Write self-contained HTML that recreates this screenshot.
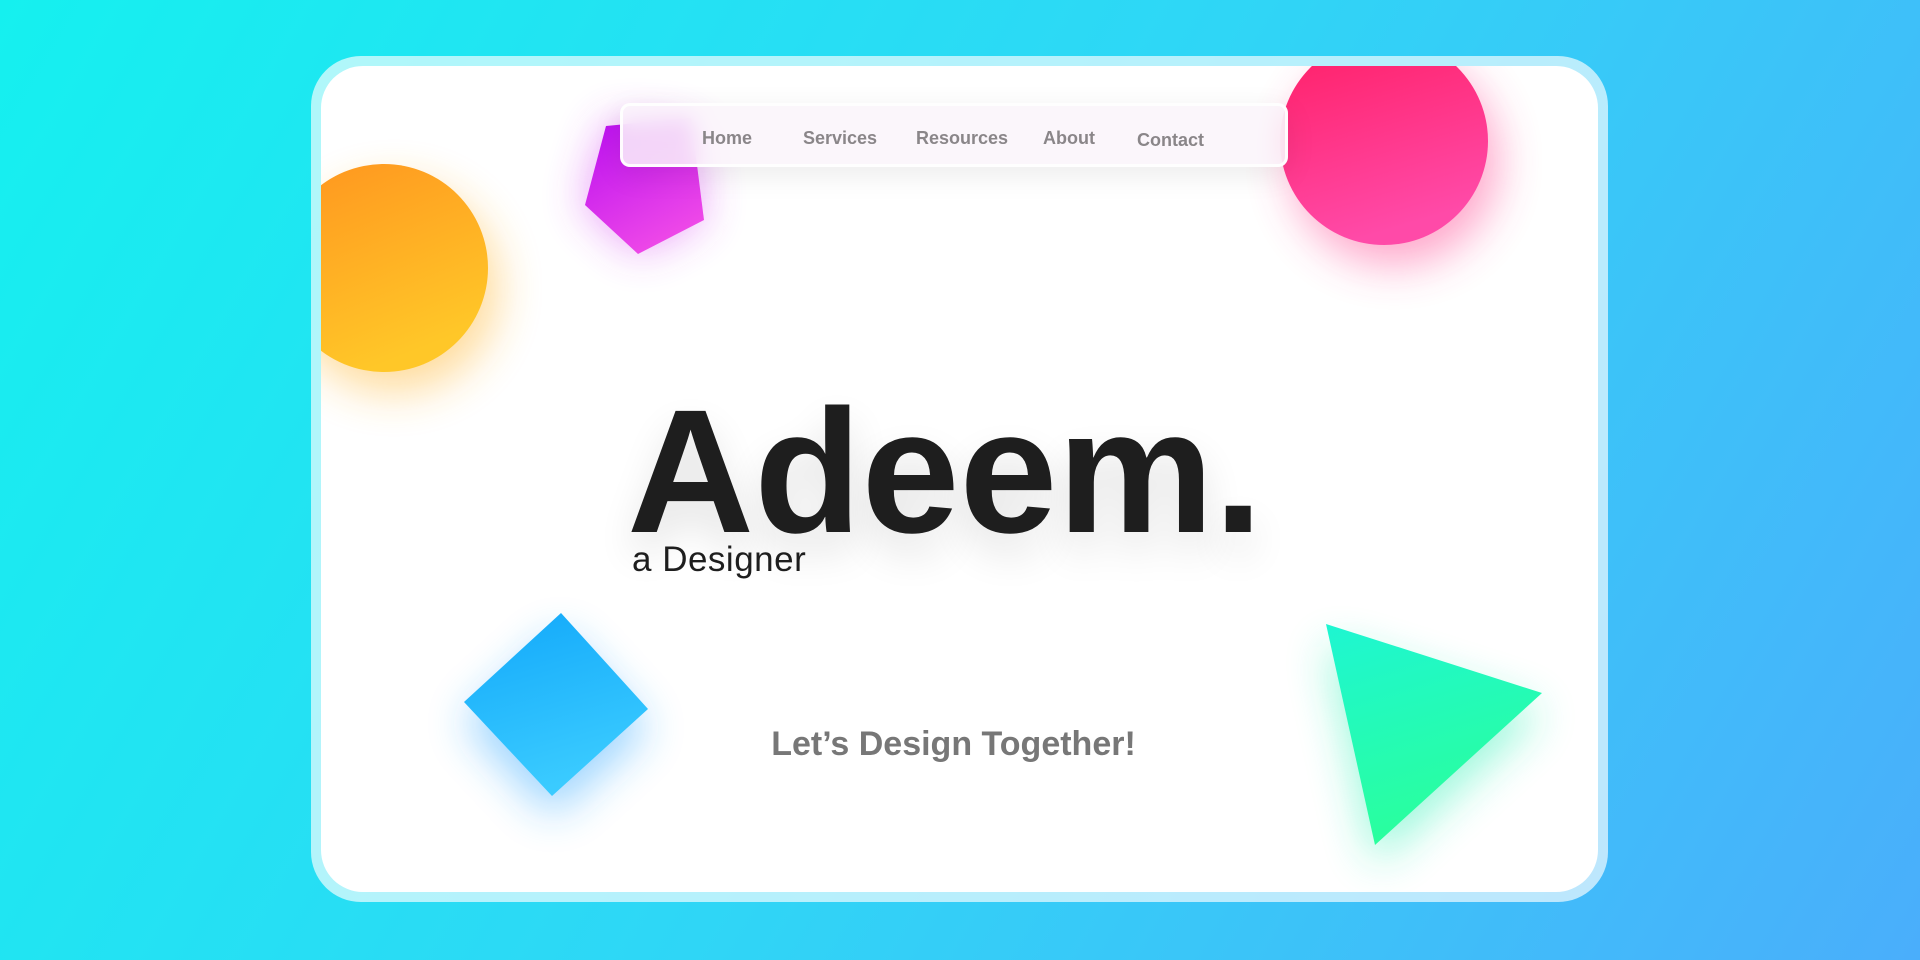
<!DOCTYPE html>
<html><head><style>
html,body{margin:0;padding:0;width:1920px;height:960px;overflow:hidden}
body{background:linear-gradient(120deg,#15f0ef 0%,#2fd6f6 50%,#4aaefb 100%);font-family:"Liberation Sans",sans-serif;position:relative}
.card{position:absolute;left:311px;top:56px;width:1297px;height:846px;border-radius:50px;background:rgba(255,255,255,0.65)}
.inner{position:absolute;left:321px;top:66px;width:1277px;height:826px;border-radius:42px;background:#fff;overflow:hidden}
.nav{position:absolute;left:299px;top:37px;width:668px;height:64px;border-radius:10px;background:rgba(250,245,250,0.85);border:3px solid rgba(255,255,255,0.9);box-sizing:border-box;box-shadow:0 8px 30px rgba(0,0,0,0.08);backdrop-filter:blur(10px)}
.nav span{position:absolute;top:22px;font-size:18px;font-weight:bold;color:#8a8689}
</style></head><body>
<div class="card"></div>
<div class="inner">
<svg width="1277" height="826" style="position:absolute;left:0;top:0">
<defs>
<linearGradient id="o" x1="0" y1="0" x2="0.4" y2="1"><stop offset="0" stop-color="#ff951f"/><stop offset="1" stop-color="#ffc728"/></linearGradient>
<linearGradient id="p" x1="0" y1="0" x2="0.5" y2="1"><stop offset="0" stop-color="#b80ef0"/><stop offset="1" stop-color="#ee48e8"/></linearGradient>
<linearGradient id="r" x1="0" y1="0" x2="0.3" y2="1"><stop offset="0" stop-color="#ff1e65"/><stop offset="1" stop-color="#ff4aa8"/></linearGradient>
<linearGradient id="b" x1="0" y1="0" x2="0.3" y2="1"><stop offset="0" stop-color="#12a8fa"/><stop offset="1" stop-color="#3acbff"/></linearGradient>
<linearGradient id="g" x1="0" y1="0" x2="0.3" y2="1"><stop offset="0" stop-color="#1ef6d2"/><stop offset="1" stop-color="#2aff9c"/></linearGradient>
<filter id="f" x="-50%" y="-50%" width="200%" height="200%"><feGaussianBlur stdDeviation="22"/></filter>
</defs>
<g opacity="0.45" filter="url(#f)">
<circle cx="73" cy="222" r="104" fill="#ffb020"/>
<polygon points="287,56 372,62 383,153 317,188 261,139" fill="#d030f0"/>
<circle cx="1073" cy="95" r="104" fill="#ff3a8a"/>
<polygon points="240,567 327,663 231,750 143,656" fill="#20a0ff"/>
<polygon points="1005,578 1221,647 1054,799" fill="#20f0b0"/>
</g>
<circle cx="63" cy="202" r="104" fill="url(#o)"/>
<polygon points="285,60 370,52 383,154 317,188 264,139" fill="url(#p)"/>
<circle cx="1063" cy="75" r="104" fill="url(#r)"/>
<polygon points="240,547 327,643 231,730 143,636" fill="url(#b)"/>
<polygon points="1005,558 1221,627 1054,779" fill="url(#g)"/>
</svg>
<div class="nav">
<span style="left:79px">Home</span><span style="left:180px">Services</span><span style="left:293px">Resources</span><span style="left:420px">About</span><span style="left:514px;top:24px">Contact</span>
</div>
<div style="position:absolute;left:306px;top:318px;font-size:176px;font-weight:bold;color:#1e1e1e;letter-spacing:0px;line-height:176px;text-shadow:0 20px 40px rgba(0,0,0,0.12)">Adeem.</div>
<div style="position:absolute;left:311px;top:474px;font-size:35px;letter-spacing:0.5px;color:#1e1e1e">a Designer</div>
<div style="position:absolute;left:0;width:1277px;text-align:center;top:659px;font-size:34px;font-weight:bold;color:#777"><span style="position:relative;left:-6px">Let’s Design Together!</span></div>
</div>
</body></html>
